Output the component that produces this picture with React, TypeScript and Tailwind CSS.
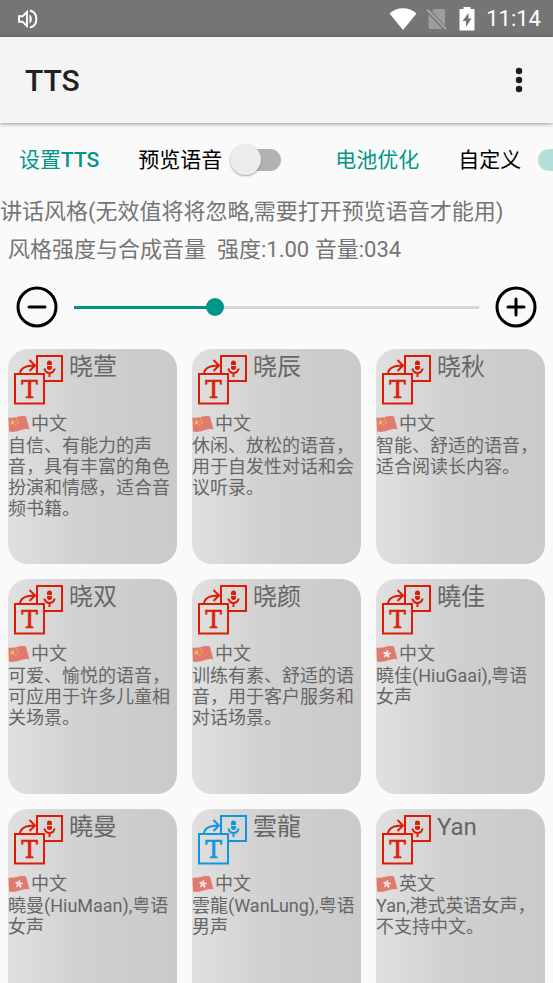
import { useState } from "react"

type Flag = "cn" | "hk";

interface Voice {
    name: string;
    language: string;
    flag: Flag;
    male?: boolean;
    description: string;
}

const VOICES: Voice[] = [
    { name: "晓萱", language: "中文", flag: "cn", description: "自信、有能力的声音，具有丰富的角色扮演和情感，适合音频书籍。" },
    { name: "晓辰", language: "中文", flag: "cn", description: "休闲、放松的语音，用于自发性对话和会议听录。" },
    { name: "晓秋", language: "中文", flag: "cn", description: "智能、舒适的语音，适合阅读长内容。" },
    { name: "晓双", language: "中文", flag: "cn", description: "可爱、愉悦的语音，可应用于许多儿童相关场景。" },
    { name: "晓颜", language: "中文", flag: "cn", description: "训练有素、舒适的语音，用于客户服务和对话场景。" },
    { name: "曉佳", language: "中文", flag: "hk", description: "曉佳(HiuGaai),粤语女声" },
    { name: "曉曼", language: "中文", flag: "hk", description: "曉曼(HiuMaan),粤语女声" },
    { name: "雲龍", language: "中文", flag: "hk", male: true, description: "雲龍(WanLung),粤语男声" },
    { name: "Yan", language: "英文", flag: "hk", description: "Yan,港式英语女声，不支持中文。" },
];

const StatusBar = () => (
    <div className="flex h-[37px] shrink-0 items-center bg-[#757575] pl-[17px] pr-3 text-white">
        <svg width="22" height="22" viewBox="0 0 22 22" fill="none" aria-hidden="true">
            <path d="M2 8.3h3.6L10 4v14l-4.400-4.300H2z" stroke="currentColor" strokeWidth="1.900" />
            <path d="M12.500 6.500c3 1.500 3 7.500 0 9z" fill="currentColor" />
            <path d="M13 2.500c8.500 2 8.500 15 0 17" stroke="currentColor" strokeWidth="2" />
        </svg>
        <div className="ml-auto flex items-center">
            <svg width="28" height="22" viewBox="0 0 28 22" fill="currentColor" aria-hidden="true">
                <path d="M.5 5.500C8-1.500 20-1.500 27.500 5.500L14 22z" />
            </svg>
            <svg className="ml-[9px]" width="21" height="22" viewBox="0 0 21 22" aria-hidden="true">
                <path d="M8 1h9q2 0 2 2v14.500L6 3.500zM2.500 6.500L16.500 21H4.500q-2 0-2-2z" fill="#9e9e9e" />
                <path d="M1 1.500l19 19.500" stroke="#a6a6a6" strokeWidth="1.800" />
            </svg>
            <svg className="ml-3" width="16" height="24" viewBox="0 0 16 24" aria-hidden="true">
                <path d="M4.500 0h7v2H15q.5 0 .5.500v20.500q0 .5-.5.500H1q-.5 0-.5-.5V2.500Q.5 2 1 2h3.500z" fill="currentColor" />
                <path d="M9.500 6L3.500 14h3.500v6l5.500-8.500H9.500z" fill="#757575" />
            </svg>
            <span className="ml-[11px] pt-px text-[22px] leading-6">11:14</span>
        </div>
    </div>
);

const AppBar = () => (
    <header className="z-10 flex h-[86px] shrink-0 items-center justify-between bg-[#f4f4f4] pl-[25px] pr-[22px] pt-[2px] shadow-[0_1px_4px_rgba(0,0,0,0.4)]">
        <h1 className="text-[30px] font-medium leading-9 text-[#212121]">TTS</h1>
        <button className="cursor-pointer" aria-label="More options">
            <svg width="24" height="36" viewBox="0 0 24 36" fill="#1c1c1c" aria-hidden="true">
                <circle cx="12" cy="8" r="3.200" />
                <circle cx="12" cy="17" r="3.200" />
                <circle cx="12" cy="26" r="3.200" />
            </svg>
        </button>
    </header>
);

const Switch = ({ id, checked, onChange }: { id: string; checked: boolean; onChange: (value: boolean) => void }) => (
    <input
        id={id}
        type="checkbox"
        role="switch"
        checked={checked}
        onChange={(e) => onChange(e.target.checked)}
        className="relative h-8 w-[62px] shrink-0 cursor-pointer appearance-none before:absolute before:inset-x-[10px] before:inset-y-[5px] before:rounded-full before:bg-[#b2b2b2] checked:before:bg-[#b3dfdb] after:absolute after:left-px after:top-0 after:size-[31px] after:rounded-full after:bg-[#ececec] after:shadow-[0_1px_2px_rgba(0,0,0,0.35)] checked:after:left-[30px] checked:after:bg-[#009688]"
    />
);

const RoundButton = ({ label, plus, onClick }: { label: string; plus?: boolean; onClick: () => void }) => (
    <button onClick={onClick} className="shrink-0 cursor-pointer" aria-label={label}>
        <svg width="42" height="42" viewBox="0 0 42 42" fill="none" stroke="#000" strokeWidth="3" strokeLinecap="round" aria-hidden="true">
            <circle cx="21" cy="21" r="19" />
            <path d={plus ? "M13 21h16M21 13v16" : "M13 21h16"} />
        </svg>
    </button>
);

const VoiceIcon = ({ male }: { male?: boolean }) => (
    <svg
        width="50"
        height="50"
        viewBox="0 0 50 50"
        fill="none"
        stroke="currentColor"
        strokeWidth="2"
        className={`shrink-0 ${male ? "text-[#1296db]" : "text-[#de1c06]"}`}
        aria-hidden="true"
    >
        <path d="M23 18V1h25v25H31" />
        <path d="M1 19h29v29.500H1z" />
        <path d="M6 18.500C6.500 13.500 11 10.500 21 10.500M15.500 5l5.500 5.500-5.500 5.500" />
        <path d="M33 10V8a2.500 2.500 0 0 1 5 0v2zM33 11h5v1.500a2.500 2.500 0 0 1-5 0z" fill="currentColor" stroke="none" />
        <path d="M30.300 13.500q1.200 4.500 5.200 4.500t5.200-4.500M35.500 18v4" />
        <text x="15.500" y="43" textAnchor="middle" fill="currentColor" strokeWidth=".6" className="font-['DejaVu_Serif',serif] text-[25px]">T</text>
    </svg>
);

const FlagIcon = ({ flag }: { flag: Flag }) => (
    <svg width="23" height="22" viewBox="0 0 23 22" className="shrink-0" aria-hidden="true">
        <path d="M.5 4.500C6 6 12 1.500 18 3.500L21.500 16.500C14 14.500 9 20.500 1 18.500z" fill="#e17b70" />
        {flag === "cn" ? (
            <g fill="#efc052">
                <path d="M4.500 6.500l.8 1.900 2 .1-1.500 1.400.5 2-1.800-1.100-1.700 1.100.4-2L1.700 8.500l2-.1z" />
                <circle cx="8.500" cy="6" r=".7" />
                <circle cx="9.700" cy="8" r=".7" />
                <circle cx="9.500" cy="10.300" r=".7" />
                <circle cx="7.700" cy="12" r=".7" />
            </g>
        ) : (
            <g fill="#f6e9e7">
                {[0, 72, 144, 216, 288].map((angle) => (
                    <ellipse key={angle} cx="11.300" cy="8.900" rx="1" ry="2" transform={`rotate(${angle} 11 11)`} />
                ))}
            </g>
        )}
    </svg>
);

const VoiceCard = ({ voice }: { voice: Voice }) => (
    <li className="h-[215px] overflow-hidden rounded-[20px] bg-linear-to-r from-[#e0e0e0] via-[#d0d0d0] via-45% to-[#cacaca] text-[#666]">
        <div className="flex h-16 gap-[5px] pl-[6px]">
            <div className="pt-[6px]">
                <VoiceIcon male={voice.male} />
            </div>
            <h2 className="pt-[2px] text-[24px] leading-8">{voice.name}</h2>
        </div>
        <div className="flex text-[18px] leading-[22px]">
            <FlagIcon flag={voice.flag} />
            <span>{voice.language}</span>
        </div>
        <p className="text-[18px] leading-[21px]">{voice.description}</p>
    </li>
);

const App = () => {
    const [preview, setPreview] = useState(false);
    const [custom, setCustom] = useState(true);
    const [volume, setVolume] = useState(34);

    const changeVolume = (step: number) => setVolume((v) => Math.min(100, Math.max(0, v + step)));

    return (
        <div lang="zh-CN" className="flex h-screen flex-col overflow-hidden bg-[#fafafa] font-[Roboto,'Noto_Sans_CJK_SC',sans-serif]">
            <StatusBar />
            <AppBar />

            <main className="flex min-h-0 flex-1 flex-col">
                <div className="flex h-[74px] shrink-0 items-center overflow-hidden whitespace-nowrap text-[21px] leading-8">
                    <button className="shrink-0 cursor-pointer px-[19px] text-[#009688]">
                        设置<span className="font-medium">TTS</span>
                    </button>
                    <div className="flex shrink-0 items-center gap-[7px] pl-5 pr-[25px]">
                        <label htmlFor="preview">预览语音</label>
                        <Switch id="preview" checked={preview} onChange={setPreview} />
                    </div>
                    <button className="shrink-0 cursor-pointer px-[19px] text-[#009688]">电池优化</button>
                    <div className="flex shrink-0 items-center gap-[7px] pl-5">
                        <label htmlFor="custom">自定义</label>
                        <Switch id="custom" checked={custom} onChange={setCustom} />
                    </div>
                </div>

                <p className="shrink-0 whitespace-nowrap text-[22px] leading-[30px] text-[#757575]">讲话风格(无效值将将忽略,需要打开预览语音才能用)</p>
                <div className="flex h-11 shrink-0 items-center gap-[11px] whitespace-nowrap pl-2 text-[22px] text-[#757575]">
                    <label htmlFor="volume">风格强度与合成音量</label>
                    <span>强度:1.00 音量:{String(volume).padStart(3, "0")}</span>
                </div>

                <div className="flex h-[72px] shrink-0 items-center gap-4 px-4">
                    <RoundButton label="减小" onClick={() => changeVolume(-1)} />
                    <input
                        id="volume"
                        type="range"
                        min={0}
                        max={100}
                        value={volume}
                        onChange={(e) => setVolume(Number(e.target.value))}
                        className="h-[3px] min-w-0 flex-1 cursor-pointer appearance-none [&::-webkit-slider-thumb]:size-[18px] [&::-webkit-slider-thumb]:appearance-none [&::-webkit-slider-thumb]:rounded-full [&::-webkit-slider-thumb]:bg-[#009688]"
                        style={{ background: `linear-gradient(to right, #009688 ${volume}%, #d6d6d6 ${volume}%)` }}
                    />
                    <RoundButton label="增大" plus onClick={() => changeVolume(1)} />
                </div>

                <ul className="grid min-h-0 flex-1 auto-rows-max grid-cols-3 gap-[15px] overflow-hidden px-2 pt-[6px]">
                    {VOICES.map((voice) => (
                        <VoiceCard key={voice.name} voice={voice} />
                    ))}
                </ul>
            </main>
        </div>
    );
};

export default App;
